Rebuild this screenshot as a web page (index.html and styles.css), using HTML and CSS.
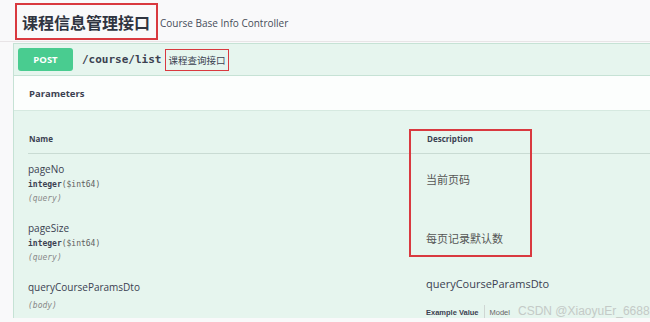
FILE: index.html
```html
<!DOCTYPE html>
<html lang="zh">
<head>
  <meta charset="UTF-8" />
  <meta name="viewport" content="width=device-width, initial-scale=1.0" />
  <title>课程信息管理接口</title>
  <link rel="stylesheet" href="styles.css">
</head>
<body>
  <header class="tag">
    <h3 class="tag-name">课程信息管理接口</h3>
    <span class="tag-desc">Course Base Info Controller</span>
  </header>

  <section class="opblock">
    <div class="summary">
      <span class="method">POST</span>
      <span class="path">/course/list</span>
      <span class="summary-desc">课程查询接口</span>
    </div>

    <div class="section-header">Parameters</div>

    <div class="params">
      <div class="params-head">
        <span>Name</span>
        <span>Description</span>
      </div>

      <div class="param-row">
        <div>
          <div class="param-name">pageNo</div>
          <div class="param-type">integer<span class="fmt">($int64)</span></div>
          <div class="param-in">(query)</div>
        </div>
        <div class="param-desc">当前页码</div>
      </div>

      <div class="param-row">
        <div>
          <div class="param-name">pageSize</div>
          <div class="param-type">integer<span class="fmt">($int64)</span></div>
          <div class="param-in">(query)</div>
        </div>
        <div class="param-desc">每页记录默认数</div>
      </div>

      <div class="param-row last">
        <div>
          <div class="param-name">queryCourseParamsDto</div>
          <div class="param-in body-in">(body)</div>
        </div>
        <div>
          <div class="body-name">queryCourseParamsDto</div>
          <div class="tabs">
            <span class="tab active">Example Value</span>
            <span class="tab">Model</span>
          </div>
        </div>
      </div>
    </div>

    <div class="mark-box"></div>
  </section>

  <div class="watermark">CSDN @XiaoyuEr_6688</div>
</body>
</html>
```

FILE: styles.css
```css
body {
  margin: 0;
  background-color: #f9f9fa;
  font-family: "Open Sans", "Noto Sans CJK SC", sans-serif;
  color: #3b4151;
  overflow: hidden;
}

.tag {
  display: flex;
  align-items: flex-start;
  height: 38px;
  padding: 3px 0 0 15px;
  border-bottom: 1px solid #e8e4e6;
}

.tag-name {
  margin: 0;
  height: 37px;
  box-sizing: border-box;
  display: flex;
  align-items: center;
  padding: 0 6px 0 5px;
  border: 2px solid #d9393f;
  font-family: "Noto Sans CJK SC", sans-serif;
  font-size: 16px;
  font-weight: bold;
  color: #2f3440;
}

.tag-desc {
  align-self: center;
  margin: 0 0 0 2px;
  font-size: 10px;
  padding-top: 2px;
  color: #474c59;
}

.opblock {
  position: relative;
  margin: 1px 0 0 13px;
  border: 1px solid #c6e2d5;
  border-right: 0;
  border-bottom: 0;
  background-color: #e6f5ee;
}

.summary {
  display: flex;
  align-items: center;
  padding: 4px;
  border-bottom: 1px solid #c6e2d5;
}

.method {
  width: 55px;
  height: 23px;
  display: flex;
  align-items: center;
  justify-content: center;
  background-color: #49cc90;
  border-radius: 3px;
  color: #fff;
  font-size: 9.5px;
  font-weight: bold;
}

.path {
  margin-left: 9px;
  font-family: "DejaVu Sans Mono", monospace;
  font-size: 11px;
  font-weight: bold;
}

.summary-desc {
  margin-left: 4px;
  height: 22px;
  box-sizing: border-box;
  display: flex;
  align-items: center;
  padding: 0 2px;
  border: 1.5px solid #d9393f;
  font-family: "Noto Sans CJK SC", sans-serif;
  font-size: 9.5px;
}

.section-header {
  height: 34px;
  display: flex;
  align-items: center;
  padding-left: 15px;
  background-color: rgba(255, 255, 255, 0.85);
  border-bottom: 1px solid #d6e9e0;
  font-size: 9.5px;
  font-weight: bold;
}

.params {
  padding-left: 14px;
}

.params-head {
  display: grid;
  grid-template-columns: 398px 1fr;
  padding: 22px 0 8px 1px;
  border-bottom: 1px solid #c9dbd3;
  font-size: 8px;
  font-weight: bold;
  line-height: 12px;
}

.param-row {
  display: grid;
  grid-template-columns: 398px 1fr;
  padding: 8px 0;
}

.param-row.last {
  padding-bottom: 0;
}

.param-name {
  font-size: 10px;
  line-height: 14px;
}

.param-type {
  margin-top: 3px;
  font-family: "DejaVu Sans Mono", monospace;
  font-size: 8px;
  font-weight: bold;
  line-height: 12px;
}

.param-type .fmt {
  font-weight: normal;
  color: #606060;
}

.param-in {
  margin-top: 2px;
  font-family: "DejaVu Sans Mono", monospace;
  font-size: 8px;
  font-style: italic;
  line-height: 12px;
  color: #888;
}

.body-in {
  margin-top: 6px;
}

.param-desc {
  margin-top: 10px;
  font-family: "Noto Sans CJK SC", sans-serif;
  font-size: 11px;
  line-height: 14px;
  color: #555;
}

.body-name {
  margin-top: -3px;
  font-size: 11px;
  line-height: 14px;
}

.tabs {
  display: flex;
  align-items: center;
  margin-top: 15px;
  height: 12px;
  font-family: "Liberation Sans", Arial, sans-serif;
  font-size: 7.5px;
}

.tab {
  padding-right: 5px;
  color: #666;
}

.tab.active {
  font-weight: bold;
  color: #3b4151;
  border-right: 1px solid #cfd6d3;
  height: 14px;
  display: flex;
  align-items: center;
  margin-right: 5px;
}

.mark-box {
  position: absolute;
  left: 395px;
  top: 85px;
  width: 123px;
  height: 128px;
  box-sizing: border-box;
  border: 2px solid #d9393f;
}

.watermark {
  position: absolute;
  left: 518px;
  top: 304px;
  font-family: "Liberation Sans", Arial, sans-serif;
  font-size: 12px;
  color: #c4cac7;
}
```
